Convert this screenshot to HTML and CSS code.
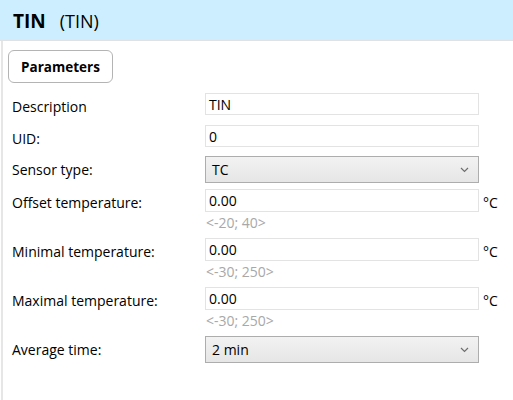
FILE: index.html
```html
<!DOCTYPE html>
<html>
<head>
<meta charset="utf-8">
<link rel="stylesheet" href="styles.css">
</head>
<body>
<div class="header"><span class="title">TIN</span><span class="subtitle">(TIN)</span></div>
<div class="panel">
  <div class="tabs"><div class="tab">Parameters</div></div>
  <div class="form">
    <div class="row r1"><div class="label">Description</div><div class="field"><div class="input">TIN</div></div></div>
    <div class="row r2"><div class="label">UID:</div><div class="field"><div class="input">0</div></div></div>
    <div class="row r3"><div class="label">Sensor type:</div><div class="field"><div class="select"><span>TC</span><svg class="chev" width="9" height="6" viewBox="0 0 9 6"><path d="M1 1 L4.5 4.5 L8 1" fill="none" stroke="#6e6e6e" stroke-width="1.2"/></svg></div></div></div>
    <div class="row r4"><div class="label">Offset temperature:</div><div class="field"><div class="input">0.00</div><div class="hint">&lt;-20; 40&gt;</div></div><div class="unit">°C</div></div>
    <div class="row r4"><div class="label">Minimal temperature:</div><div class="field"><div class="input">0.00</div><div class="hint">&lt;-30; 250&gt;</div></div><div class="unit">°C</div></div>
    <div class="row r4"><div class="label">Maximal temperature:</div><div class="field"><div class="input">0.00</div><div class="hint">&lt;-30; 250&gt;</div></div><div class="unit">°C</div></div>
    <div class="row r3"><div class="label">Average time:</div><div class="field"><div class="select"><span>2 min</span><svg class="chev" width="9" height="6" viewBox="0 0 9 6"><path d="M1 1 L4.5 4.5 L8 1" fill="none" stroke="#6e6e6e" stroke-width="1.2"/></svg></div></div></div>
  </div>
</div>
</body>
</html>
```
FILE: styles.css
```css
html, body {
  margin: 0;
  padding: 0;
  background: #ffffff;
  font-family: "Open Sans", "Noto Sans", sans-serif;
  color: #000;
  width: 513px;
  height: 400px;
  overflow: hidden;
}
.header {
  height: 41px;
  background: #cdeefe;
  border-bottom: 1px solid #e2e2e2;
  box-sizing: border-box;
  display: flex;
  align-items: center;
  padding-left: 13px;
  padding-top: 1px;
}
.title {
  font-weight: 700;
  font-size: 19px;
}
.subtitle {
  font-size: 18px;
  margin-left: 14px;
}
.panel {
  height: 359px;
  border-left: 2px solid #e6e6e6;
  margin-left: 1px;
  box-sizing: border-box;
}
.tabs {
  padding: 9px 0 0 5px;
  height: 52px;
  box-sizing: border-box;
}
.tab {
  width: 105px;
  height: 33px;
  box-sizing: border-box;
  border: 1px solid #b4b4b4;
  border-radius: 6px;
  font-weight: 700;
  font-size: 13.5px;
  display: flex;
  align-items: center;
  justify-content: center;
}
.form {
  display: flex;
  flex-direction: column;
}
.row {
  display: flex;
  align-items: flex-start;
  font-size: 14px;
}
.r1 { height: 32px; }
.r2 { height: 31px; }
.r3 { height: 33px; }
.r4 { height: 49px; }
.label {
  width: 202px;
  padding-left: 9px;
  box-sizing: border-box;
  line-height: 21px;
  padding-top: 3px;
}
.field {
  width: 274px;
}
.input {
  height: 23px;
  box-sizing: border-box;
  border: 1px solid #e3e3e3;
  padding-left: 3px;
  line-height: 22px;
}
.r1 .input, .r2 .input { height: 22px; }
.select {
  height: 27px;
  box-sizing: border-box;
  border: 1px solid #adadad;
  background: linear-gradient(#f2f2f2, #e6e6e6);
  display: flex;
  align-items: center;
  justify-content: space-between;
  padding: 0 9px 0 6px;
}
.chev { display: block; }
.hint {
  color: #a8a8a8;
  font-size: 14px;
  line-height: 21px;
  padding-left: 1px;
}
.unit {
  margin-left: 4px;
  line-height: 23px;
  padding-top: 2px;
}
```
